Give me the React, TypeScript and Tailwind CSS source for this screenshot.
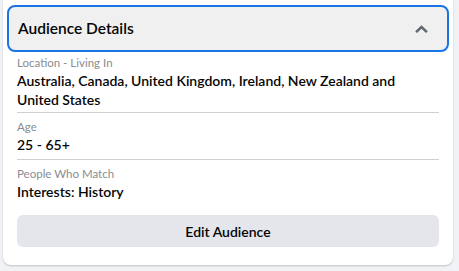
import React from "react";

type Row = { label: string; value: string };

const rows: Row[] = [
  {
    label: "Location - Living In",
    value: "Australia, Canada, United Kingdom, Ireland, New Zealand and United States",
  },
  { label: "Age", value: "25 - 65+" },
  { label: "People Who Match", value: "Interests: History" },
];

function ChevronUp() {
  return (
    <svg width="13" height="8" viewBox="0 0 13 8" className="text-[#606770]">
      <path d="M6.5 0.2 L12.8 6.2 L11 8 L6.5 3.7 L2 8 L0.2 6.2 Z" fill="currentColor" />
    </svg>
  );
}

export default function App() {
  return (
    <div className="h-[271px] w-[459px] bg-[#f0f2f5] pl-[3px] pr-[6px] pb-[6px] font-['Lato',sans-serif]">
      <div className="h-full rounded-b-lg bg-white px-1 pt-[5px] shadow-[0_1px_2px_rgba(0,0,0,0.2)]">
        <div className="flex h-[47px] items-center justify-between rounded-lg border-2 border-[#1b74e4] bg-[#f0f0f0] pl-[9px] pr-[19px]">
          <span className="text-[15.5px] font-semibold text-[#050505]">Audience Details</span>
          <ChevronUp />
        </div>

        <div className="px-[10px]">
          {rows.map((r, i) => (
            <div
              key={r.label}
              className={
                i === 0
                  ? "border-b border-[#ced0d4] pt-[3px] pb-[3px]"
                  : i === 1
                  ? "border-b border-[#ced0d4] pt-[6px] pb-[5px]"
                  : "pt-[6px]"
              }
            >
              <div className="text-[11.5px] leading-4 text-[#8a8d91]">{r.label}</div>
              <div className="text-[14px] leading-[19px] font-semibold text-[#050505]">{r.value}</div>
            </div>
          ))}

          <button className="mt-[14px] flex h-8 w-full items-center justify-center rounded-md bg-[#e4e6eb] text-[14px] font-semibold text-[#050505]">
            Edit Audience
          </button>
        </div>
      </div>
    </div>
  );
}
